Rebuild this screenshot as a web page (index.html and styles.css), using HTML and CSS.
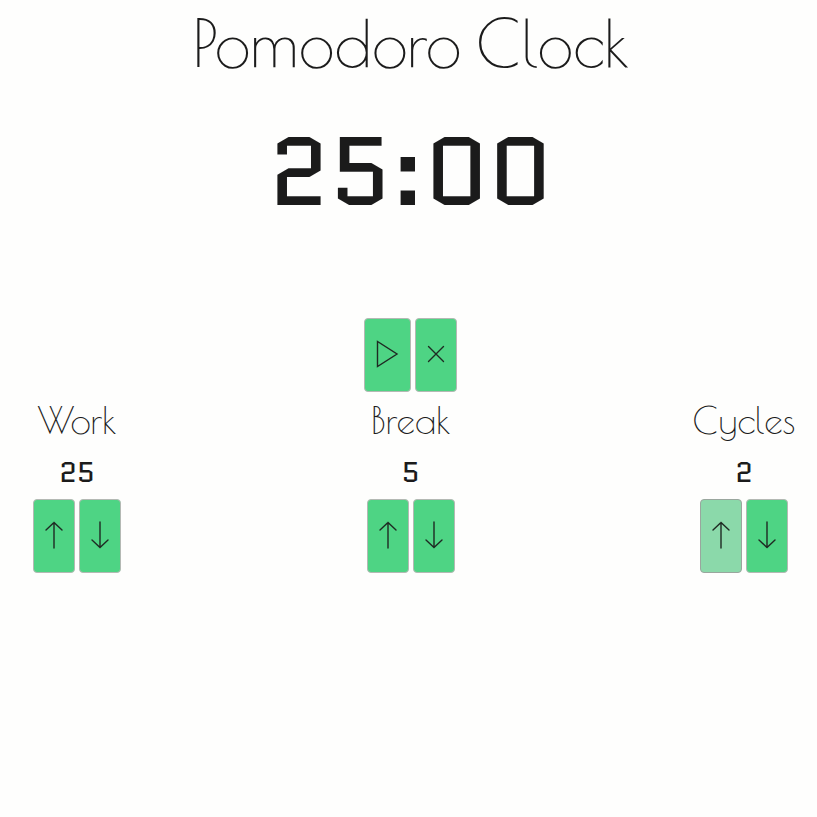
FILE: index.html
```html
<!DOCTYPE html>
<html lang="en">
<head>
<meta charset="utf-8">
<meta name="viewport" content="width=device-width, initial-scale=1">
<title>Pomodoro Clock</title>
<link rel="stylesheet" href="styles.css">
</head>
<body>
<main class="clock">
  <h1 class="title">Pomodoro Clock</h1>
  <div class="time" role="timer">25:00</div>
  <div class="controls">
    <button class="btn btn-play" type="button" aria-label="Start"><svg class="icon" viewBox="0 0 24 30"><path d="M1.500 2.500V27.500L21 15Z"/></svg></button>
    <button class="btn" type="button" aria-label="Reset"><svg class="icon" viewBox="0 0 24 30"><path d="M4.500 7.500l15 15M19.500 7.500l-15 15"/></svg></button>
  </div>
  <div class="settings">
    <section class="setting">
      <h2 class="label">Work</h2>
      <div class="value">25</div>
      <div class="controls">
        <button class="btn" type="button" aria-label="Increase work"><svg class="icon" viewBox="0 0 24 30"><path d="M12 28V2.500M4 10l8-7.500 8 7.500"/></svg></button>
        <button class="btn" type="button" aria-label="Decrease work"><svg class="icon" viewBox="0 0 24 30"><path d="M12 2v25.500M4 20l8 7.500 8-7.500"/></svg></button>
      </div>
    </section>
    <section class="setting">
      <h2 class="label">Break</h2>
      <div class="value">5</div>
      <div class="controls">
        <button class="btn" type="button" aria-label="Increase break"><svg class="icon" viewBox="0 0 24 30"><path d="M12 28V2.500M4 10l8-7.500 8 7.500"/></svg></button>
        <button class="btn" type="button" aria-label="Decrease break"><svg class="icon" viewBox="0 0 24 30"><path d="M12 2v25.500M4 20l8 7.500 8-7.500"/></svg></button>
      </div>
    </section>
    <section class="setting">
      <h2 class="label">Cycles</h2>
      <div class="value">2</div>
      <div class="controls">
        <button class="btn btn-active" type="button" aria-label="Increase cycles"><svg class="icon" viewBox="0 0 24 30"><path d="M12 28V2.500M4 10l8-7.500 8 7.500"/></svg></button>
        <button class="btn" type="button" aria-label="Decrease cycles"><svg class="icon" viewBox="0 0 24 30"><path d="M12 2v25.500M4 20l8 7.500 8-7.500"/></svg></button>
      </div>
    </section>
  </div>
</main>
</body>
</html>
```
FILE: styles.css
```css
* {
  box-sizing: border-box;
}

body {
  margin: 0;
  background: #fefefd;
  color: #1b1b1b;
  font-family: "Poiret One", Lato, "Liberation Sans", sans-serif;
}

.clock {
  padding: 3px 20px 4px 24px;
  text-align: center;
}

.title,
.label {
  margin: 0;
  font-weight: 400;
}

.title {
  font-size: 65px;
  line-height: 80px;
}

.time,
.value {
  font-family: Quantico, "DejaVu Sans Mono", monospace;
  font-weight: 400;
}

.time {
  margin: 37px 0 94px;
  font-size: 96px;
  line-height: 104px;
}

.controls {
  display: flex;
  justify-content: center;
  gap: 4px;
}

.btn {
  display: flex;
  align-items: center;
  justify-content: center;
  width: 42px;
  height: 74px;
  padding: 0 0 3px;
  border: 1px solid #b4b9b4;
  border-radius: 4px;
  background: #4ed484;
  color: #1f2a23;
}

.btn-play {
  width: 47px;
}

.btn-active {
  border-color: #9aa69e;
  background: #8bd9aa;
}

.icon {
  flex: none;
  width: 24px;
  height: 30px;
  fill: none;
  stroke: currentColor;
  stroke-width: 1.4;
  stroke-linecap: round;
}

.settings {
  display: flex;
  justify-content: space-between;
  margin-top: 2px;
}

.setting {
  width: 106px;
}

.label {
  font-size: 37px;
  line-height: 52px;
}

.value {
  margin: 8px 0 9px;
  font-size: 28px;
  line-height: 36px;
}
```
